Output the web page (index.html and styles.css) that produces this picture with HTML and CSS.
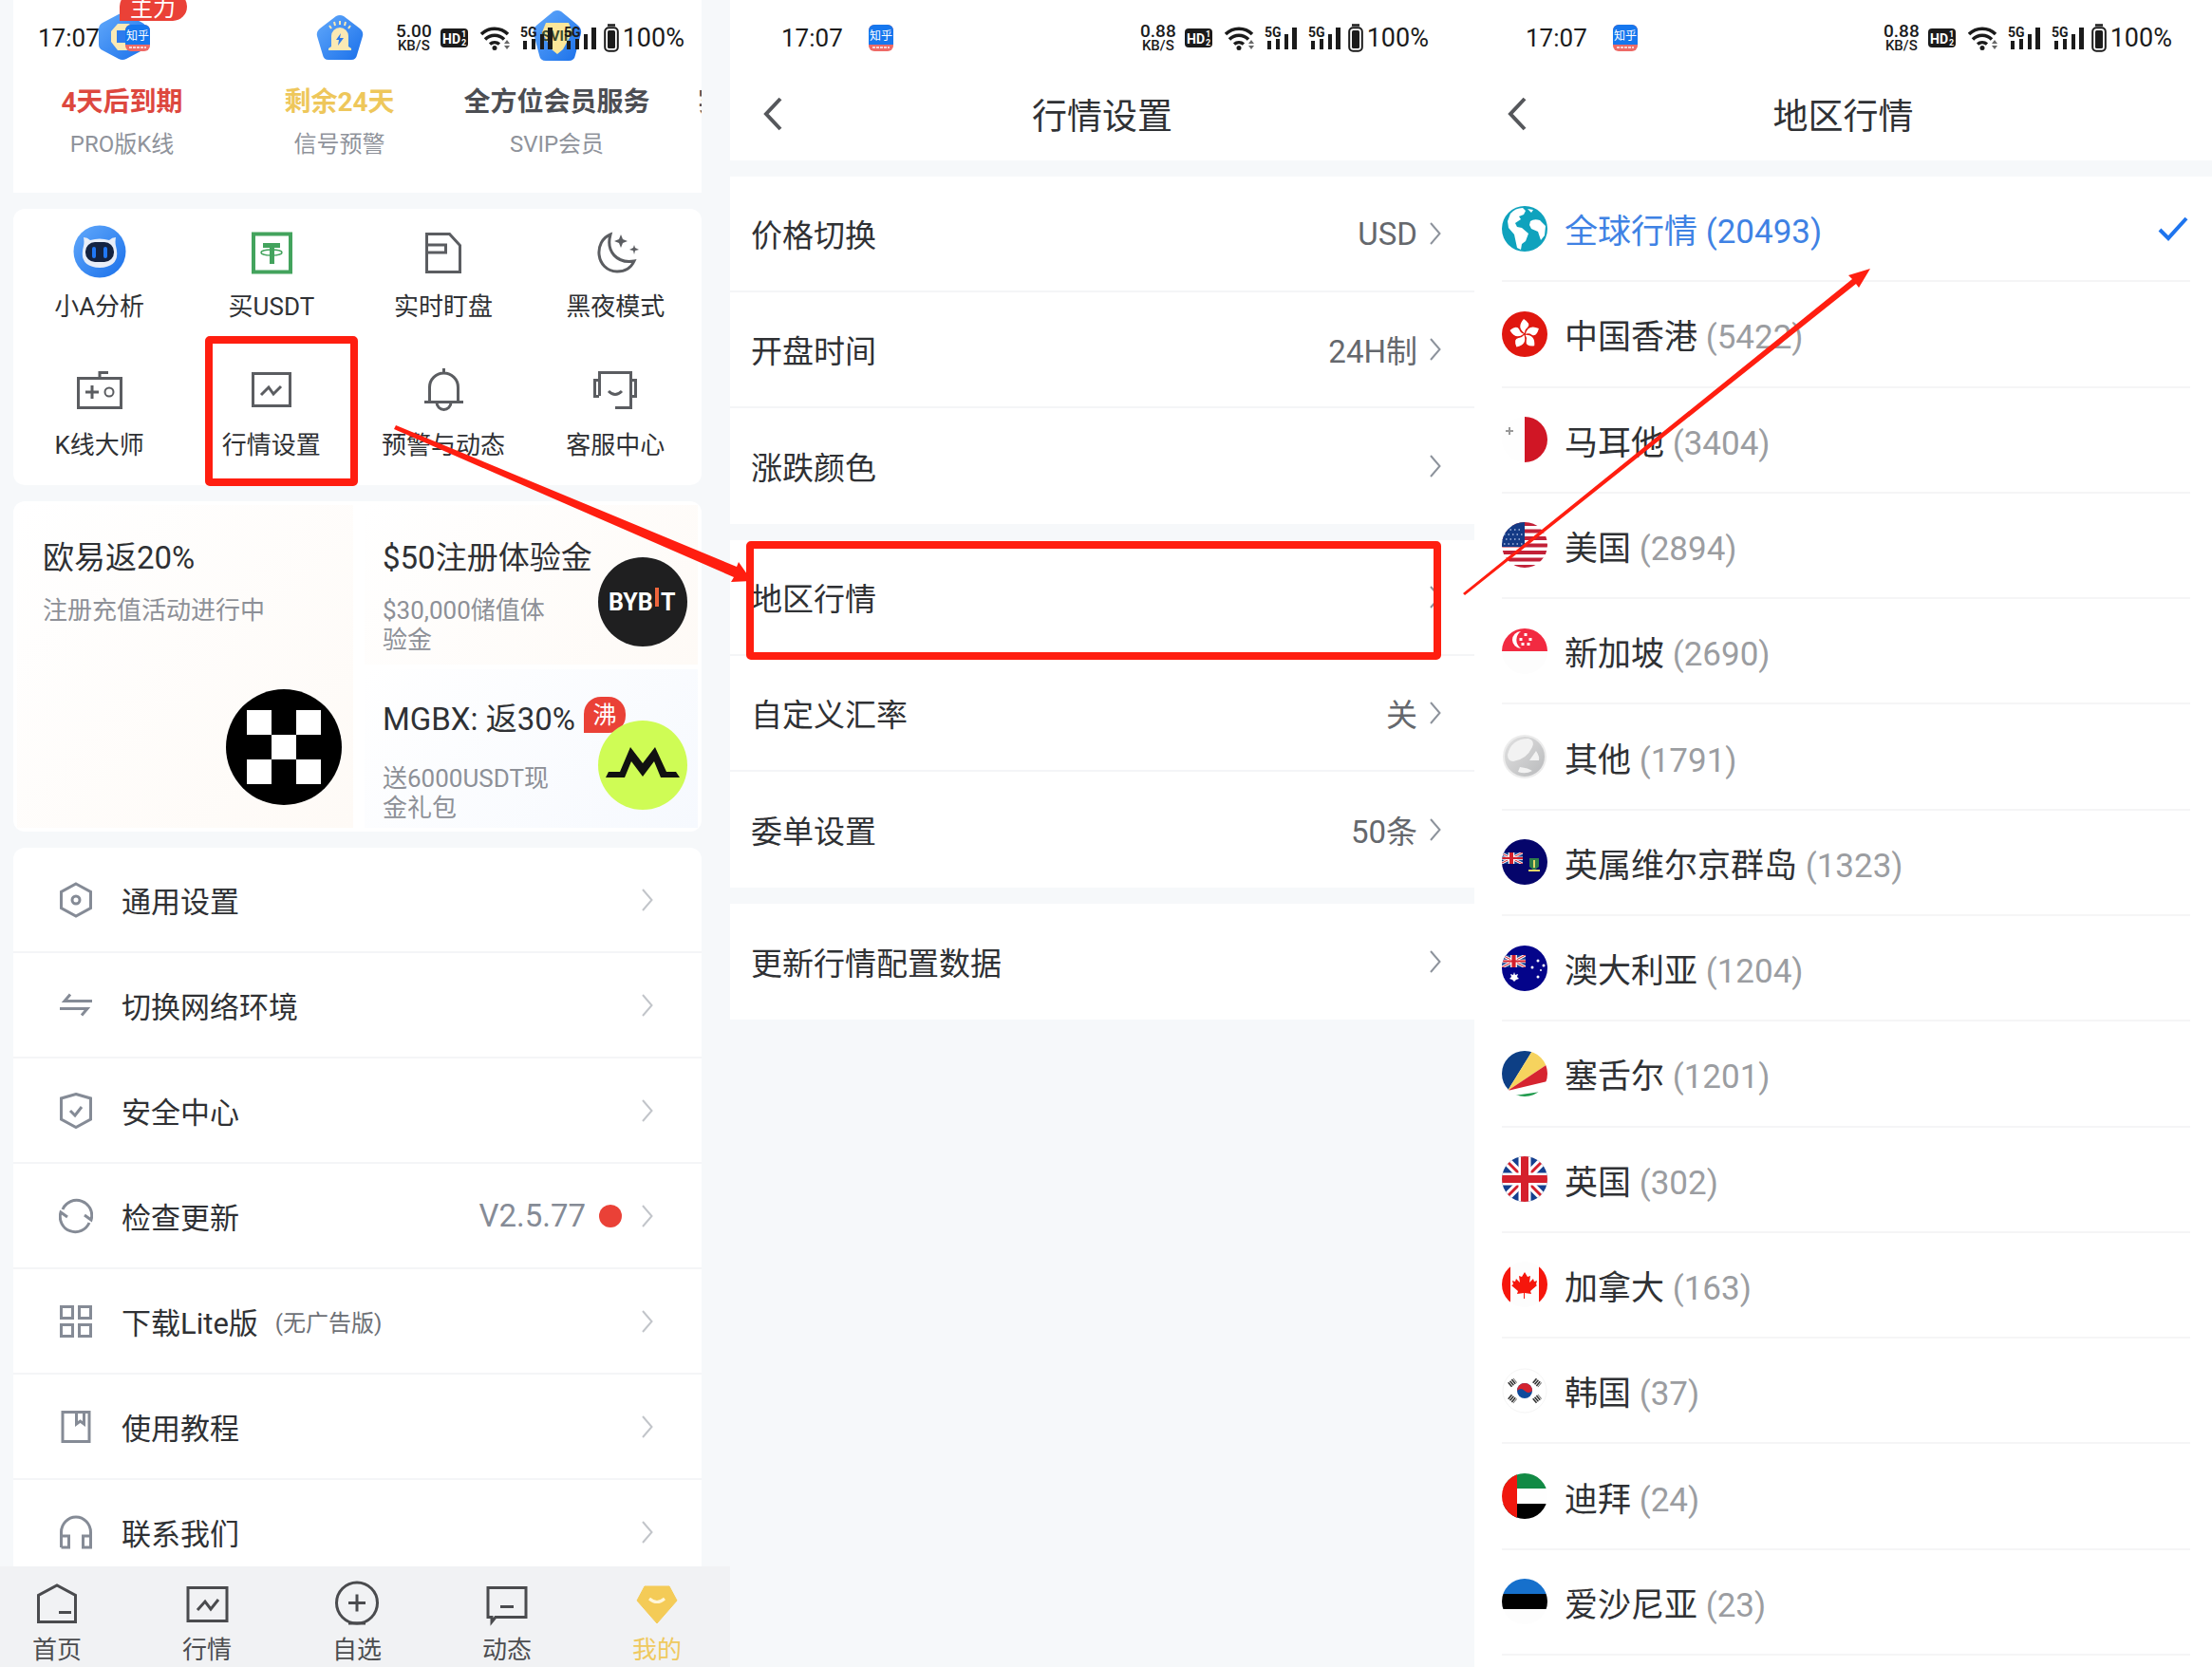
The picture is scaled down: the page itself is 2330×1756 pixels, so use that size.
FILE: index.html
```html
<!DOCTYPE html>
<html lang="zh-CN">
<head>
    <meta charset="UTF-8">
    <meta name="viewport" content="width=device-width, initial-scale=1.0">
    <title>行情设置</title>
    <link rel="stylesheet" href="styles.css">
</head>
<body>
    <svg class="sprite" aria-hidden="true">
        <defs>
            <clipPath id="round"><circle cx="24" cy="24" r="24"/></clipPath>
            <linearGradient id="blue" x1="0" y1="0" x2="1" y2="1">
                <stop offset="0" stop-color="#62a9fb"/>
                <stop offset="1" stop-color="#1a70ea"/>
            </linearGradient>
            <linearGradient id="grey" x1="0" y1="0" x2="1" y2="1">
                <stop offset="0" stop-color="#e2e2e2"/>
                <stop offset="1" stop-color="#b8b9bb"/>
            </linearGradient>
        </defs>
        <symbol id="zhihu" viewBox="0 0 26 28">
            <rect width="26" height="28" rx="6" fill="#ee6a66"/>
            <path d="M0 21V6a6 6 0 0 1 6-6h14a6 6 0 0 1 6 6v15z" fill="#1677ee"/>
            <text x="13" y="16" font-size="12" text-anchor="middle" fill="#fff">知乎</text>
            <path d="M4 24h18" stroke="#fff" stroke-width="2" stroke-dasharray="3 1" opacity=".7"/>
        </symbol>
        <symbol id="hd" viewBox="0 0 29 22">
            <rect y="1" width="29" height="20" rx="4" fill="#1b1b1b"/>
            <text x="2" y="17" font-size="14" font-weight="700" fill="#fff">HD</text>
            <text x="22" y="10" font-size="9" font-weight="700" fill="#fff">1</text>
            <text x="22" y="19" font-size="9" font-weight="700" fill="#fff">2</text>
        </symbol>
        <symbol id="wifi" viewBox="0 0 32 26">
            <g fill="none" stroke="#1b1b1b" stroke-width="3.500">
                <path d="M1 9a20 20 0 0 1 28 0M5 14.500a14 14 0 0 1 20 0M10 19.500a8 8 0 0 1 10 0"/>
            </g>
            <circle cx="15" cy="23.500" r="2.500" fill="#1b1b1b"/>
            <path d="M28 15l3 4h-6zM28 25l3-4h-6z" fill="#666"/>
        </symbol>
        <symbol id="signal" viewBox="0 0 34 26">
            <text x="0" y="12" font-size="14" font-weight="700" fill="#1b1b1b">5G</text>
            <path d="M3 16h4v9H3zM12 14h4v11h-4zM21 9h4v16h-4zM29 2h5v23h-5z" fill="#1b1b1b"/>
        </symbol>
        <symbol id="battery" viewBox="0 0 16 30">
            <path d="M4 1.500h8" stroke="#1b1b1b" stroke-width="2.500"/>
            <rect x="1.200" y="4.200" width="13.600" height="24.600" rx="4" fill="none" stroke="#1b1b1b" stroke-width="2"/>
            <rect x="4" y="7" width="8" height="19" rx="1.500" fill="#1b1b1b"/>
        </symbol>
        <symbol id="chevron" viewBox="0 0 12 24">
            <path d="M1 1l9.500 11L1 23" fill="none" stroke="currentColor" stroke-width="2"/>
        </symbol>
        <symbol id="back" viewBox="0 0 20 36">
            <path d="M18 2L3 18l15 16" fill="none" stroke="#55575b" stroke-width="4"/>
        </symbol>
        <symbol id="market" viewBox="0 0 56 56">
            <path d="M8.500 10.500h39v34h-39zM17 33l8-8 5 7 8-8" fill="none" stroke="currentColor" stroke-width="3"/>
        </symbol>
        <!-- also stretched into the corner of the other flags -->
        <symbol id="union" viewBox="0 0 48 48" preserveAspectRatio="none">
            <rect width="48" height="48" fill="#15408f"/>
            <path d="M0 0l48 48M48 0L0 48" stroke="#fff" stroke-width="9"/>
            <path d="M0 0l48 48M48 0L0 48" stroke="#d5202c" stroke-width="3"/>
            <path d="M24 0v48M0 24h48" stroke="#fff" stroke-width="13"/>
            <path d="M24 0v48M0 24h48" stroke="#d5202c" stroke-width="8"/>
        </symbol>
    </svg>

    <main class="board">
        <!-- 我的 -->
        <section class="phone mine">
            <div class="status status-over">
                <span class="clock">17:07</span>
                <svg class="zhihu"><use href="#zhihu"/></svg>
                <div class="indicators">
                    <span class="speed"><b>5.00</b><i>KB/S</i></span>
                    <svg class="hd"><use href="#hd"/></svg>
                    <svg class="wifi"><use href="#wifi"/></svg>
                    <svg class="signal"><use href="#signal"/></svg>
                    <svg class="signal"><use href="#signal"/></svg>
                    <svg class="battery"><use href="#battery"/></svg>
                    <span class="percent">100%</span>
                </div>
            </div>

            <div class="mine-body">
                <div class="card services">
                    <a class="service" href="#">
                        <span class="service-icon">
                            <svg width="54" height="54" viewBox="0 0 54 54">
                                <path d="M23 4q4-2 8 0l17 9q4 2 4 7v16q0 4-4 6l-17 9q-4 2-8 0L6 42q-4-2-4-6V20q0-5 4-7z" fill="url(#blue)"/>
                                <path d="M22 14h12l6 8v12l-6 8H22l-7-9V22z" fill="#fbe9b4"/>
                                <path d="M21 21h9v13h-9z" fill="#2d7bed"/>
                            </svg>
                            <em class="tag">主力</em>
                        </span>
                        <strong class="red">4天后到期</strong>
                        <small>PRO版K线</small>
                    </a>
                    <a class="service" href="#">
                        <span class="service-icon">
                            <svg width="54" height="54" viewBox="0 0 54 54">
                                <path d="M23 6q4-2 8 0l17 13q4 3 3 8l-6 20q-1 5-6 5H15q-5 0-6-5L3 27q-1-5 3-8z" fill="url(#blue)"/>
                                <path d="M18 38V27a9 9 0 0 1 18 0v11l3 2v2H15v-2z" fill="#fbe9b4"/>
                                <path d="M28 24l-5 7h3l-1 6 6-8h-4z" fill="#2d7bed"/>
                                <path d="M27 11v4M21 12l1 4M33 12l-1 4M16 16l2 3M38 16l-2 3" stroke="#fbe9b4" stroke-width="2"/>
                            </svg>
                        </span>
                        <strong class="yellow">剩余24天</strong>
                        <small>信号预警</small>
                    </a>
                    <a class="service" href="#">
                        <span class="service-icon">
                            <svg width="54" height="54" viewBox="0 0 54 54">
                                <path d="M23 1q4-2 8 0l17 14q5 4 4 9l-6 23q-1 6-7 6H15q-6 0-7-6L2 24q-1-5 4-9z" fill="url(#blue)"/>
                                <path d="M15 13h24l4 10-10 18-6 5-6-5-10-18z" fill="#fbe69a"/>
                                <text x="27" y="32" font-size="15" font-weight="700" text-anchor="middle" fill="#3d4a2c">SVIP</text>
                            </svg>
                        </span>
                        <strong>全方位会员服务</strong>
                        <small>SVIP会员</small>
                    </a>
                    <a class="service service-next" href="#">
                        <span class="service-icon"></span>
                        <strong>实</strong>
                    </a>
                </div>

                <div class="card shortcuts">
                    <a class="shortcut" href="#">
                        <svg viewBox="0 0 56 56">
                            <circle cx="28" cy="28" r="27.500" fill="url(#blue)"/>
                            <path d="M11 13q4 0 7 3 10-3 20 0 3-3 7-3-1 5 0 9 6 22-17 23-23-1-17-23 1-4 0-9z" fill="#e8eef8"/>
                            <rect x="13" y="18" width="30" height="21" rx="10" fill="#142341"/>
                            <path d="M22 25v8M34 25v8" stroke="#2178f5" stroke-width="4" stroke-linecap="round"/>
                        </svg>
                        <span>小A分析</span>
                    </a>
                    <a class="shortcut" href="#">
                        <svg viewBox="0 0 56 56">
                            <path d="M9 9.500h39v40H9z" fill="none" stroke="#43a35d" stroke-width="4"/>
                            <path d="M19 19h18v5H19zM26 24h5v17h-5z" fill="#43a35d"/>
                            <ellipse cx="28" cy="29" rx="11" ry="3" fill="none" stroke="#43a35d" stroke-width="1.500"/>
                        </svg>
                        <span>买USDT</span>
                    </a>
                    <a class="shortcut" href="#">
                        <svg viewBox="0 0 56 56" class="line">
                            <path d="M10.500 9.500h24l11 12v28h-35zM10.500 21h20v8h-20"/>
                        </svg>
                        <span>实时盯盘</span>
                    </a>
                    <a class="shortcut" href="#">
                        <svg viewBox="0 0 56 56" class="line">
                            <path d="M23 10C5 17 7 48 30 49q13 0 18-11C30 41 18 28 23 10z"/>
                            <path d="M34 10l2 5 5 2-5 2-2 5-2-5-5-2 5-2zM48 21l1 3 4 2-4 1-1 4-1-4-4-1 4-2z" fill="#5b5d61" stroke="none"/>
                        </svg>
                        <span>黑夜模式</span>
                    </a>
                    <a class="shortcut" href="#">
                        <svg viewBox="0 0 56 56" class="line">
                            <path d="M5.500 15.500h45v31h-45zM28 15V9.500h9M13 30h14M20 23v14"/>
                            <circle cx="38" cy="30" r="4.500" stroke-width="2"/>
                        </svg>
                        <span>K线大师</span>
                    </a>
                    <a class="shortcut" href="#">
                        <svg class="line"><use href="#market"/></svg>
                        <span>行情设置</span>
                    </a>
                    <a class="shortcut" href="#">
                        <svg viewBox="0 0 56 56" class="line">
                            <path d="M8 40.500h41M13.500 40V25a15 15 0 0 1 30 0v15M28.500 10V5M21 41a7.500 7.500 0 0 0 15 0"/>
                        </svg>
                        <span>预警与动态</span>
                    </a>
                    <a class="shortcut" href="#">
                        <svg viewBox="0 0 56 56" class="line">
                            <path d="M11.500 34V9.500h33v37H28M11 17.500H6.500v17H11M45 17.500h4.500v17H45M21 29q7 7 14 0"/>
                        </svg>
                        <span>客服中心</span>
                    </a>
                </div>

                <div class="card banners">
                    <a class="banner banner-big warm" href="#">
                        <h3>欧易返20%</h3>
                        <p>注册充值活动进行中</p>
                        <svg class="logo-big" viewBox="0 0 122 122">
                            <circle cx="61" cy="61" r="61"/>
                            <path d="M22 22h26v26H22zM74 22h26v26H74zM48 48h26v26H48zM22 74h26v26H22zM74 74h26v26H74z" fill="#fff"/>
                        </svg>
                    </a>
                    <a class="banner warm" href="#">
                        <h3>$50注册体验金</h3>
                        <p>$30,000储值体验金</p>
                        <svg class="logo" viewBox="0 0 94 94">
                            <circle cx="47" cy="47" r="47" fill="#1f1f20"/>
                            <text x="11" y="56" font-size="25" font-weight="700" fill="#fff">BYB</text>
                            <path d="M62 32v20" stroke="#f0663c" stroke-width="4"/>
                            <text x="66" y="56" font-size="25" font-weight="700" fill="#fff">T</text>
                        </svg>
                    </a>
                    <a class="banner cool" href="#">
                        <h3>MGBX: 返30%</h3>
                        <p>送6000USDT现金礼包</p>
                        <em class="hot">沸</em>
                        <svg class="logo" viewBox="0 0 94 94">
                            <circle cx="47" cy="47" r="47" fill="#cffc55"/>
                            <path d="M8 60l3-6h12l11-26 13 17 13-17 12 26h10l4 6H66l-7-17-12 16-12-16-7 17z" fill="#111"/>
                        </svg>
                    </a>
                </div>

                <nav class="card menu">
                    <a class="menu-row" href="#">
                        <svg class="menu-icon" viewBox="0 0 36 38"><path d="M18 2l15.500 8.500v17L18 36 2.500 27.500v-17z"/><circle cx="18" cy="19" r="4"/></svg>
                        <span>通用设置</span>
                        <svg class="arrow"><use href="#chevron"/></svg>
                    </a>
                    <a class="menu-row" href="#">
                        <svg class="menu-icon" viewBox="0 0 36 38"><path d="M35 14.500H6l6-7M1 22.500h29l-6 7"/></svg>
                        <span>切换网络环境</span>
                        <svg class="arrow"><use href="#chevron"/></svg>
                    </a>
                    <a class="menu-row" href="#">
                        <svg class="menu-icon" viewBox="0 0 36 38"><path d="M18 1.500L33.500 6v22L18 36.500 2.500 28V6zM12 19l5 5 7-9"/></svg>
                        <span>安全中心</span>
                        <svg class="arrow"><use href="#chevron"/></svg>
                    </a>
                    <a class="menu-row" href="#">
                        <svg class="menu-icon" viewBox="0 0 36 38"><path d="M4 12a16 16 0 0 1 30 11l-7-5M32 26A16 16 0 0 1 2 15l7 5"/></svg>
                        <span>检查更新</span>
                        <span class="version">V2.5.77</span>
                        <i class="dot"></i>
                        <svg class="arrow"><use href="#chevron"/></svg>
                    </a>
                    <a class="menu-row" href="#">
                        <svg class="menu-icon" viewBox="0 0 36 38"><path d="M2.500 3.500h12v12h-12zM21.500 3.500h12v12h-12zM2.500 22.500h12v12h-12zM21.500 22.500h12v12h-12z"/></svg>
                        <span>下载Lite版</span>
                        <small>(无广告版)</small>
                        <svg class="arrow"><use href="#chevron"/></svg>
                    </a>
                    <a class="menu-row" href="#">
                        <svg class="menu-icon" viewBox="0 0 36 38"><path d="M4 3.500h28v31H4zM18.500 4v12l4-3 4 3V4"/></svg>
                        <span>使用教程</span>
                        <svg class="arrow"><use href="#chevron"/></svg>
                    </a>
                    <a class="menu-row" href="#">
                        <svg class="menu-icon" viewBox="0 0 36 38"><path d="M2.500 35V19a15.500 16 0 0 1 31 0v16h-8V23h8M2.500 23h8v12h-8"/></svg>
                        <span>联系我们</span>
                        <svg class="arrow"><use href="#chevron"/></svg>
                    </a>
                </nav>
            </div>

            <nav class="tabs">
                <a class="tab" href="#">
                    <svg viewBox="0 0 44 44"><path d="M2.500 41.500v-28L22 3l19.500 10.500v28zM24 31.500h13"/></svg>
                    首页
                </a>
                <a class="tab" href="#">
                    <svg viewBox="0 0 44 44"><path d="M2 5.500h41v35H2zM12 29l8-9 6 8 8-10"/></svg>
                    行情
                </a>
                <a class="tab" href="#">
                    <svg viewBox="0 0 44 44"><circle cx="22" cy="21.500" r="21.500"/><path d="M13 21.500h18M22 12.500v18M13 43h18"/></svg>
                    自选
                </a>
                <a class="tab" href="#">
                    <svg viewBox="0 0 44 44"><path d="M2 5.500h40v31H10l-4 5v-5H2zM15 25.500h14"/></svg>
                    动态
                </a>
                <a class="tab active" href="#">
                    <svg viewBox="0 0 44 44"><path d="M9 4h26l8 15-21 24L1 19z" fill="#f4cb57" stroke="#f4cb57" stroke-width="1"/><path d="M14 17q8 7 16 0" stroke="#fff6d8"/></svg>
                    我的
                </a>
            </nav>
        </section>

        <!-- 行情设置 -->
        <section class="phone settings">
            <header class="top">
                <div class="status">
                    <span class="clock">17:07</span>
                    <svg class="zhihu"><use href="#zhihu"/></svg>
                    <div class="indicators">
                        <span class="speed"><b>0.88</b><i>KB/S</i></span>
                        <svg class="hd"><use href="#hd"/></svg>
                        <svg class="wifi"><use href="#wifi"/></svg>
                        <svg class="signal"><use href="#signal"/></svg>
                        <svg class="signal"><use href="#signal"/></svg>
                        <svg class="battery"><use href="#battery"/></svg>
                        <span class="percent">100%</span>
                    </div>
                </div>
                <div class="titlebar">
                    <button class="back" aria-label="返回"><svg><use href="#back"/></svg></button>
                    <h1>行情设置</h1>
                </div>
            </header>
            <div class="group">
                <a class="setting" href="#"><span>价格切换</span><span class="value">USD</span><svg class="arrow"><use href="#chevron"/></svg></a>
                <a class="setting" href="#"><span>开盘时间</span><span class="value">24H制</span><svg class="arrow"><use href="#chevron"/></svg></a>
                <a class="setting" href="#"><span>涨跌颜色</span><svg class="arrow"><use href="#chevron"/></svg></a>
            </div>
            <div class="group">
                <a class="setting" href="#"><span>地区行情</span><svg class="arrow"><use href="#chevron"/></svg></a>
                <a class="setting" href="#"><span>自定义汇率</span><span class="value">关</span><svg class="arrow"><use href="#chevron"/></svg></a>
                <a class="setting" href="#"><span>委单设置</span><span class="value">50条</span><svg class="arrow"><use href="#chevron"/></svg></a>
            </div>
            <div class="group">
                <a class="setting" href="#"><span>更新行情配置数据</span><svg class="arrow"><use href="#chevron"/></svg></a>
            </div>
        </section>

        <!-- 地区行情 -->
        <section class="phone regions">
            <header class="top">
                <div class="status">
                    <span class="clock">17:07</span>
                    <svg class="zhihu"><use href="#zhihu"/></svg>
                    <div class="indicators">
                        <span class="speed"><b>0.88</b><i>KB/S</i></span>
                        <svg class="hd"><use href="#hd"/></svg>
                        <svg class="wifi"><use href="#wifi"/></svg>
                        <svg class="signal"><use href="#signal"/></svg>
                        <svg class="signal"><use href="#signal"/></svg>
                        <svg class="battery"><use href="#battery"/></svg>
                        <span class="percent">100%</span>
                    </div>
                </div>
                <div class="titlebar">
                    <button class="back" aria-label="返回"><svg><use href="#back"/></svg></button>
                    <h1>地区行情</h1>
                </div>
            </header>
            <div class="region-list">
                <a class="region selected" href="#">
                    <svg class="flag" viewBox="0 0 48 48"><g clip-path="url(#round)">
                        <rect width="48" height="48" fill="#0fa2bd"/>
                        <path d="M9 8q5-6 13-6l3 3-2 4-5 2 2 3-6 4 2 4 5 1 7 6-3 8-4 3-1 6-4-2-3-14-6-7-1-7z" fill="#fff"/>
                        <path d="M30 16q4-3 10-1l6 6-1 10-4 5-3-9-7-3-2-4zM27 3l6 1-2 3z" fill="#fff"/>
                    </g></svg>
                    <span>全球行情 <em>(20493)</em></span>
                    <svg class="check" viewBox="0 0 32 26"><path d="M2 14l9 9L30 2" fill="none" stroke="#1e74ee" stroke-width="4"/></svg>
                </a>
                <a class="region" href="#">
                    <svg class="flag" viewBox="0 0 48 48"><g clip-path="url(#round)">
                        <rect width="48" height="48" fill="#e0170f"/>
                        <g fill="#fff">
                            <path id="petal" d="M24 23q-9-6-1-15 8 5 4 9-3 2-3 6z"/>
                            <use href="#petal" transform="rotate(72 24 24)"/>
                            <use href="#petal" transform="rotate(144 24 24)"/>
                            <use href="#petal" transform="rotate(216 24 24)"/>
                            <use href="#petal" transform="rotate(288 24 24)"/>
                        </g>
                    </g></svg>
                    <span>中国香港 <em>(5422)</em></span>
                </a>
                <a class="region" href="#">
                    <svg class="flag" viewBox="0 0 48 48"><g clip-path="url(#round)">
                        <rect width="48" height="48" fill="#fefefe"/>
                        <path d="M24 0h24v48H24z" fill="#d01625"/>
                        <path d="M8 11v8M4 15h8" stroke="#999" stroke-width="2"/>
                    </g></svg>
                    <span>马耳他 <em>(3404)</em></span>
                </a>
                <a class="region" href="#">
                    <svg class="flag" viewBox="0 0 48 48"><g clip-path="url(#round)">
                        <rect width="48" height="48" fill="#fff"/>
                        <path d="M0 2h48M0 9.500h48M0 17h48M0 24.500h48M0 32h48M0 39.500h48M0 47h48" stroke="#c22138" stroke-width="3.800"/>
                        <path d="M0 0h24v26H0z" fill="#143a85"/>
                        <path d="M4 8h18M2 13h20M4 18h18M2 23h20" stroke="#a9bbe0" stroke-width="1.500" stroke-dasharray="1.500 3"/>
                    </g></svg>
                    <span>美国 <em>(2894)</em></span>
                </a>
                <a class="region" href="#">
                    <svg class="flag" viewBox="0 0 48 48"><g clip-path="url(#round)">
                        <rect width="48" height="48" fill="#fdfdfd"/>
                        <path d="M0 0h48v24H0z" fill="#f22a41"/>
                        <path d="M20 3a9 9 0 1 0 0 18 11 11 0 0 1 0-18z" fill="#fff"/>
                        <path d="M25 5v3M20 10v3M30 10v3M22 15v3M28 15v3" stroke="#fff" stroke-width="3"/>
                    </g></svg>
                    <span>新加坡 <em>(2690)</em></span>
                </a>
                <a class="region" href="#">
                    <svg class="flag" viewBox="0 0 48 48">
                        <circle cx="24" cy="24" r="22" fill="url(#grey)" stroke="#ececec" stroke-width="2"/>
                        <path d="M6 22Q10 5 28 5q7 2 4 9-6 13-20 15-6 0-6-7zM19 35q9 1 13 4-7 4-15 1zM29 28l7-10q4 6 3 10z" fill="#f2f2f2"/>
                    </svg>
                    <span>其他 <em>(1791)</em></span>
                </a>
                <a class="region" href="#">
                    <svg class="flag" viewBox="0 0 48 48"><g clip-path="url(#round)">
                        <rect width="48" height="48" fill="#05056b"/>
                        <use href="#union" x="-2" y="14" width="24" height="12"/>
                        <path d="M29 20h10v9l-5 4-5-4z" fill="#2f7d4a"/>
                        <path d="M34 22v8M28 33h12" stroke="#e7d66a" stroke-width="2"/>
                    </g></svg>
                    <span>英属维尔京群岛 <em>(1323)</em></span>
                </a>
                <a class="region" href="#">
                    <svg class="flag" viewBox="0 0 48 48"><g clip-path="url(#round)">
                        <rect width="48" height="48" fill="#04048a"/>
                        <use href="#union" x="0" y="10" width="25" height="13"/>
                        <g fill="#fff">
                            <path d="M13 28l1 3 3-1-1 3 2 2-3 1-2 2-2-2-3-1 2-2-1-3 3 1z"/>
                            <circle cx="38" cy="16" r="1.500"/><circle cx="32" cy="23" r="1.500"/><circle cx="44" cy="21" r="1.500"/><circle cx="38" cy="33" r="1.500"/><circle cx="41" cy="26" r="1"/>
                        </g>
                    </g></svg>
                    <span>澳大利亚 <em>(1204)</em></span>
                </a>
                <a class="region" href="#">
                    <svg class="flag" viewBox="0 0 48 48"><g clip-path="url(#round)">
                        <rect width="48" height="48" fill="#fff"/>
                        <path d="M6 42L0 48V0h32z" fill="#0d3f85"/>
                        <path d="M6 42L32 0h16v14z" fill="#f6d35e"/>
                        <path d="M6 42l42-28v18z" fill="#d62430"/>
                        <path d="M6 48l42-6v6z" fill="#1f9a4d"/>
                    </g></svg>
                    <span>塞舌尔 <em>(1201)</em></span>
                </a>
                <a class="region" href="#">
                    <svg class="flag" viewBox="0 0 48 48"><g clip-path="url(#round)"><use href="#union" width="48" height="48"/></g></svg>
                    <span>英国 <em>(302)</em></span>
                </a>
                <a class="region" href="#">
                    <svg class="flag" viewBox="0 0 48 48"><g clip-path="url(#round)">
                        <rect width="48" height="48" fill="#fdfdfd"/>
                        <path d="M0 0h9v48H0zM39 0h9v48h-9zM24 11l3 5 3-1-1 7 4-4 1 3 3-1-1 4 1 1-7 6 1 3-7-1v6h-1v-6l-7 1 1-3-7-6 2-1-1-4 3 1 1-3 4 4-1-7 3 1z" fill="#f6160c"/>
                    </g></svg>
                    <span>加拿大 <em>(163)</em></span>
                </a>
                <a class="region" href="#">
                    <svg class="flag" viewBox="0 0 48 48">
                        <circle cx="24" cy="24" r="23" fill="#fff" stroke="#f5f5f5"/>
                        <circle cx="24" cy="24" r="8" fill="#0f4a9c"/>
                        <path d="M16 24a8 8 0 0 1 16 0q-4 4-8 0t-8 0z" fill="#d3222f"/>
                        <g stroke="#333" stroke-width="6" stroke-dasharray="1.600 .8">
                            <path d="M8 18l6-5M34 35l6-5M8 30l6 5M34 13l6 5"/>
                        </g>
                    </svg>
                    <span>韩国 <em>(37)</em></span>
                </a>
                <a class="region" href="#">
                    <svg class="flag" viewBox="0 0 48 48"><g clip-path="url(#round)">
                        <rect width="48" height="48" fill="#fefefe"/>
                        <path d="M0 0h48v16H0z" fill="#128a45"/>
                        <path d="M0 32h48v16H0z"/>
                        <path d="M0 0h16v48H0z" fill="#f0170e"/>
                    </g></svg>
                    <span>迪拜 <em>(24)</em></span>
                </a>
                <a class="region" href="#">
                    <svg class="flag" viewBox="0 0 48 48"><g clip-path="url(#round)">
                        <rect width="48" height="48" fill="#fdfdfd"/>
                        <path d="M0 0h48v16H0z" fill="#1670cc"/>
                        <path d="M0 16h48v16H0z"/>
                    </g></svg>
                    <span>爱沙尼亚 <em>(23)</em></span>
                </a>
            </div>
        </section>

        <!-- steps: 行情设置 -> 地区行情 -> list -->
        <svg class="marks" viewBox="0 0 2330 1756" preserveAspectRatio="none" aria-hidden="true">
            <rect x="220" y="358" width="153" height="150" rx="1"/>
            <rect x="790" y="574" width="724" height="117" rx="1"/>
            <path d="M417 448l359 149 2-5 14 20-22 1 3-5L415 452z"/>
            <path d="M1541 625L1951 294l-4-4 23-7-12 20-3-4-412 328z"/>
        </svg>
    </main>
</body>
</html>
```

FILE: styles.css
```css
* {
    box-sizing: border-box;
}
body {
    margin: 0;
    font-family: Roboto, "Noto Sans CJK SC", sans-serif;
    color: #2f3134;
    background: #fff;
}
a {
    color: inherit;
    text-decoration: none;
}
h1, h3, p {
    margin: 0;
    font-weight: 400;
}
em, i {
    font-style: normal;
}
svg {
    flex: none;
}
.sprite {
    position: absolute;
    width: 0;
    height: 0;
}
.board {
    position: relative;
    display: grid;
    grid-template-columns: 769fr 784fr 777fr;
    height: 100vh;
    overflow: hidden;
}
.phone {
    position: relative;
    display: flex;
    flex-direction: column;
    min-width: 0;
    min-height: 0;
    background: #f6f8fa;
}

/* status bar */
.status {
    display: flex;
    align-items: center;
    height: 80px;
    padding: 0 48px 0 54px;
    color: #1b1b1b;
}
.status-over {
    position: absolute;
    top: 0;
    left: 0;
    right: 0;
    z-index: 2;
    padding-left: 40px;
}
.clock {
    font-size: 26px;
}
.percent {
    font-size: 27px;
}
.zhihu {
    width: 26px;
    height: 28px;
    margin-left: 27px;
}
.indicators {
    display: flex;
    align-items: center;
    margin-left: auto;
}
.speed {
    display: flex;
    flex-direction: column;
    align-items: center;
    margin-right: 9px;
}
.speed b {
    font-size: 19px;
    line-height: 16px;
    font-weight: 500;
}
.speed i {
    font-size: 15px;
    line-height: 14px;
    font-weight: 500;
}
.hd {
    width: 29px;
    height: 22px;
    margin-right: 13px;
}
.wifi {
    width: 32px;
    height: 26px;
    margin-right: 10px;
}
.signal {
    width: 34px;
    height: 26px;
    margin-right: 12px;
}
.signal + .battery {
    margin-left: -4px;
}
.battery {
    width: 16px;
    height: 30px;
    margin-right: 4px;
}
.regions .status {
    padding-right: 42px;
}

/* left screen */
.mine-body {
    flex: 1;
    min-height: 0;
    overflow: hidden;
    display: flex;
    flex-direction: column;
    gap: 17px;
    padding: 0 30px 0 14px;
}
.card {
    flex: none;
    background: #fff;
    border-radius: 12px;
}
.services {
    display: flex;
    height: 203px;
    overflow: hidden;
    padding-top: 11px;
    border-radius: 0;
}
.service {
    flex: none;
    width: 229px;
    display: flex;
    flex-direction: column;
    align-items: center;
}
.service-icon {
    position: relative;
    height: 54px;
    margin-bottom: 23px;
}
.service strong {
    font-size: 28px;
    line-height: 40px;
    margin-bottom: 8px;
    color: #4c4e53;
}
.service .red {
    color: #dd483f;
}
.service .yellow {
    color: #eec75b;
}
.service small {
    font-size: 24px;
    line-height: 32px;
    color: #8f939b;
}
.service-next {
    align-items: flex-start;
    padding-left: 34px;
}
.tag {
    position: absolute;
    left: 24px;
    top: -19px;
    width: 71px;
    height: 30px;
    border-radius: 15px 15px 15px 0;
    background: #ea4137;
    color: #fff;
    font-size: 24px;
    line-height: 34px;
    text-align: center;
}
.shortcuts {
    display: grid;
    grid-template-columns: repeat(4, 1fr);
    row-gap: 40px;
    padding: 17px 0 22px;
}
.shortcut {
    display: flex;
    flex-direction: column;
    align-items: center;
    gap: 10px;
    font-size: 26px;
    line-height: 40px;
}
.shortcut svg {
    width: 56px;
    height: 56px;
}
.line {
    fill: none;
    stroke: #5b5d61;
    stroke-width: 3;
    color: #5b5d61;
}
.banners {
    display: grid;
    grid-template-columns: 354fr 351fr;
    grid-template-rows: 168px 167px;
    gap: 5px 12px;
    padding: 4px;
}
.banner {
    position: relative;
    padding: 31px 19px 0;
}
.banner-big {
    grid-row: span 2;
    padding-left: 27px;
}
.warm {
    background: linear-gradient(135deg, #fff, #fefaf6);
}
.cool {
    background: linear-gradient(135deg, #fff, #f6f9fe);
}
.banner h3 {
    font-size: 33px;
    line-height: 50px;
    white-space: nowrap;
}
.banner p {
    margin-top: 15px;
    max-width: 180px;
    font-size: 26px;
    line-height: 31px;
    color: #8d9097;
}
.banner-big p {
    max-width: none;
}
.cool {
    padding-top: 28px;
}
.cool p {
    margin-top: 22px;
}
.logo-big {
    position: absolute;
    right: 12px;
    bottom: 24px;
    width: 122px;
    height: 122px;
}
.logo {
    position: absolute;
    right: 11px;
    bottom: 19px;
    width: 94px;
    height: 94px;
}
.hot {
    position: absolute;
    left: 231px;
    top: 29px;
    width: 44px;
    height: 38px;
    border-radius: 18px 18px 18px 0;
    background: #ea4137;
    color: #fff;
    font-size: 25px;
    line-height: 40px;
    text-align: center;
}
.menu-row {
    display: flex;
    align-items: center;
    height: 111px;
    padding: 0 51px 0 48px;
    border-bottom: 2px solid #f4f5f7;
    font-size: 31px;
}
.menu-icon {
    width: 36px;
    height: 38px;
    margin-right: 30px;
    fill: none;
    stroke: #858b96;
    stroke-width: 3;
}
.menu-row small {
    margin-left: 18px;
    font-size: 24px;
    color: #6d7076;
}
.arrow {
    width: 12px;
    height: 24px;
    margin-left: auto;
    color: #8d939c;
}
.menu-row .arrow {
    color: #c2c5ca;
}
.version {
    margin-left: auto;
    font-size: 33px;
    color: #858b96;
}
.dot {
    width: 24px;
    height: 24px;
    margin: 0 21px 0 14px;
    border-radius: 50%;
    background: #ea4137;
}
.dot + .arrow {
    margin-left: 0;
}
.tabs {
    flex: none;
    display: grid;
    grid-template-columns: repeat(5, 1fr);
    height: 106px;
    /* the bar is wider than the screen, both ends are cut */
    margin: 0 -2px 0 -19px;
    padding-top: 17px;
    background: #f1f2f4;
}
.tab {
    display: flex;
    flex-direction: column;
    align-items: center;
    gap: 9px;
    font-size: 26px;
    line-height: 36px;
    color: #4c4d50;
}
.tab svg {
    width: 44px;
    height: 44px;
    overflow: visible;
    fill: none;
    stroke: #4a4b4e;
    stroke-width: 3;
}
.tab.active {
    color: #efc95f;
}

/* settings screen */
.top {
    flex: none;
    background: #fff;
}
.titlebar {
    position: relative;
    display: flex;
    align-items: center;
    justify-content: center;
    height: 89px;
    padding-bottom: 2px;
}
.titlebar h1 {
    font-size: 37px;
    line-height: 50px;
}
.back {
    position: absolute;
    left: 25px;
    top: 12px;
    padding: 10px;
    border: none;
    background: none;
    line-height: 0;
    cursor: pointer;
}
.back svg {
    width: 20px;
    height: 36px;
}
.group {
    margin-top: 17px;
    background: #fff;
}
.setting {
    display: flex;
    align-items: center;
    height: 122px;
    padding: 0 35px 0 22px;
    border-bottom: 2px solid #f4f5f7;
    font-size: 33px;
}
.setting:last-child {
    border-bottom: none;
}
.value {
    margin-left: auto;
    color: #65686d;
}
.value + .arrow {
    margin-left: 13px;
}

/* region screen */
.regions {
    background: #fff;
}
.regions .top {
    border-bottom: 17px solid #f6f8fa;
}
.region-list {
    flex: 1;
    display: flex;
    flex-direction: column;
    padding: 0 23px 12px 29px;
}
.region {
    flex: 1;
    display: flex;
    align-items: center;
    gap: 18px;
    border-bottom: 2px solid #f5f5f6;
    font-size: 35px;
}
.region em {
    color: #9b9da1;
}
.flag {
    width: 48px;
    height: 48px;
}
.check {
    width: 32px;
    height: 26px;
    margin: 0 2px 0 auto;
}
.selected, .selected em {
    color: #3f82e4;
}

/* red boxes and arrows */
.marks {
    position: absolute;
    inset: 0;
    z-index: 5;
    width: 100%;
    height: 100%;
    pointer-events: none;
}
.marks rect {
    fill: none;
    stroke: #ff1e10;
    stroke-width: 8;
    stroke-linejoin: round;
}
.marks path {
    fill: #ff1e10;
}
```
